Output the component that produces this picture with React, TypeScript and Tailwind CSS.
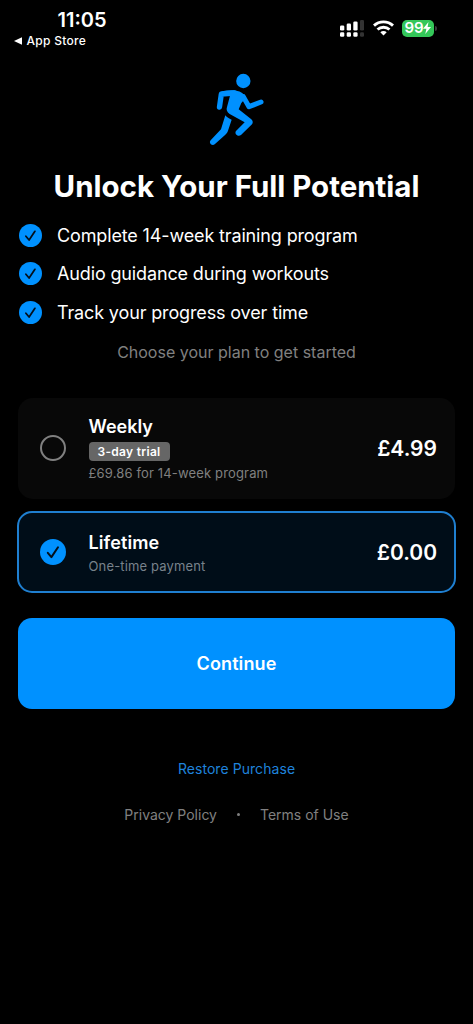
import { useState } from "react";

interface Plan {
  id: string;
  name: string;
  price: string;
  badge?: string;
  detail: string;
}

const features = [
  "Complete 14-week training program",
  "Audio guidance during workouts",
  "Track your progress over time",
];

const plans: Plan[] = [
  {
    id: "weekly",
    name: "Weekly",
    price: "£4.99",
    badge: "3-day trial",
    detail: "£69.86 for 14-week program",
  },
  {
    id: "lifetime",
    name: "Lifetime",
    price: "£0.00",
    detail: "One-time payment",
  },
];

function CheckCircle({ className }: { className: string }) {
  return (
    <svg viewBox="0 0 26 26" className={className}>
      <circle cx="13" cy="13" r="13" fill="#0091ff" />
      <path
        d="M7.800 13.800l3.600 4.300 6.600-9.800"
        fill="none"
        stroke="#04101c"
        strokeWidth="2"
        strokeLinecap="round"
        strokeLinejoin="round"
      />
    </svg>
  );
}

function Runner() {
  return (
    <svg
      viewBox="0 0 255 270"
      className="h-[90px] w-[85px]"
      fill="none"
      stroke="#0091ff"
      strokeLinecap="round"
      strokeLinejoin="round"
    >
      <circle cx="145" cy="48" r="21.500" fill="#0091ff" stroke="none" />
      <path d="M73.500 126L79 87L118 84" strokeWidth="16" />
      <path d="M145 95L162 125L198 111" strokeWidth="15" />
      <path
        d="M80 79C96 76 112 75 124 77C138 79 147 86 153 98L139 114L131 133L168 162C174 167 175 173 171 178L138 210C129 217 117 207 123 198L149 172L104 147C96 142 93 134 96 126L105 92Z"
        fill="#0091ff"
        stroke="none"
      />
      <path
        d="M91 151C96 157 102 161 110 164L99 197C97 202 95 205 91 209L60 237C51 245 40 234 47 226L78 193Z"
        fill="#0091ff"
        stroke="none"
      />
    </svg>
  );
}

function StatusBar() {
  return (
    <div className="flex h-[65px] items-start justify-between pr-[36px] pl-[14px]">
      <div>
        <div className="mt-[8px] ml-[43.500px] text-[20px] leading-[24px] font-semibold">
          11:05
        </div>
        <div className="mt-[1px] flex h-4 items-center gap-[4.500px] text-[12px] font-medium tracking-[0.3px]">
          <svg viewBox="0 0 8 8" className="h-2 w-2">
            <path d="M0 4L8 .3v7.400z" fill="white" />
          </svg>
          App Store
        </div>
      </div>
      <div className="mt-[18px] flex h-5 items-center">
        <svg viewBox="0 0 24 17" className="h-[17px] w-6" fill="white">
          <rect x="0" y="5.500" width="4.300" height="5" rx="1.300" />
          <rect x="6.700" y="3.500" width="4.300" height="7" rx="1.300" />
          <rect x="13.300" y="1.500" width="4.300" height="9" rx="1.300" />
          <rect x="20" y="0" width="4" height="10.500" rx="1.300" fill="#333" />
          <rect x="0" y="12.300" width="4.300" height="4.400" rx="1.300" />
          <rect x="6.700" y="12.300" width="4.300" height="4.400" rx="1.300" />
          <rect x="13.300" y="12.300" width="4.300" height="4.400" rx="1.300" />
          <rect x="20" y="12.300" width="4" height="4.400" rx="1.300" fill="#333" />
        </svg>
        <svg
          viewBox="0 0 21 16"
          className="ml-[9px] h-4 w-[21px]"
          fill="none"
          stroke="white"
          strokeWidth="2.900"
        >
          <path d="M1 5.600C6.300.6 14.700.6 20 5.600" />
          <path d="M4.500 9.500C8 6.400 13 6.400 16.500 9.500" />
          <path d="M7.300 12.300C9.200 10.700 11.800 10.700 13.700 12.300L10.500 15.600Z" fill="white" stroke="none" />
        </svg>
        <div className="ml-[8px] flex h-[17px] w-8 items-center justify-center rounded-[5px] bg-[#34c759] text-[15px] font-semibold tracking-[-0.2px]">
          99
          <svg viewBox="0 0 8 12" className="h-3 w-2">
            <path d="M5.500 0L0 6.800h3.400L2.300 12L8 5.100H4.600z" fill="white" />
          </svg>
        </div>
        <div className="ml-px h-[5px] w-[2px] rounded-r-full bg-[#3a3a3c]" />
      </div>
    </div>
  );
}

export default function App() {
  const [selected, setSelected] = useState("lifetime");

  return (
    <div className="h-[1024px] w-[473px] overflow-hidden bg-black font-['Inter',sans-serif] text-white">
      <StatusBar />

      <div className="pl-[195px]">
        <Runner />
      </div>

      <h1 className="mt-[11px] text-center text-[29.500px] leading-10 font-bold tracking-[-0.02px] whitespace-nowrap">
        Unlock Your Full Potential
      </h1>

      <ul className="mt-[10.500px] pl-[19px]">
        {features.map((feature) => (
          <li
            key={feature}
            className="flex h-[38.300px] items-center gap-[15px] text-[18px] tracking-[-0.14px]"
          >
            <CheckCircle className="h-[23px] w-[23px]" />
            <span>{feature}</span>
          </li>
        ))}
      </ul>

      <p className="mt-[8.500px] text-center text-[16px] leading-6 text-[#808080]">
        Choose your plan to get started
      </p>

      <div className="mt-[34px] flex flex-col gap-[12px] px-[17px]">
        {plans.map((plan) => {
          const active = plan.id === selected;
          return (
            <button
              key={plan.id}
              onClick={() => setSelected(plan.id)}
              className={`flex items-center rounded-[15px] text-left ${plan.badge ? "h-[101px]" : "h-[82px]"} ${active ? "border-2 border-[#1f7fd0] bg-[#000d18] pr-[17px] pl-[21px]" : "mx-px bg-[#080808] pr-[18px] pl-[22px]"}`}
            >
              {active ? (
                <CheckCircle className="h-[26px] w-[26px]" />
              ) : (
                <span className="h-[26px] w-[26px] rounded-full border-2 border-[#808080]" />
              )}
              <span className="ml-[22.500px] flex flex-1 flex-col items-start">
                <span
                  className={`text-[18px] leading-6 font-semibold ${plan.badge ? "pt-[1px]" : "pt-[2px] tracking-[0.1px]"}`}
                >
                  {plan.name}
                </span>
                {plan.badge && (
                  <span className="mt-[3px] mb-[3px] flex h-[19px] w-[81px] items-center justify-center rounded-[4px] bg-[#666] text-[12px] font-semibold tracking-[0.3px]">
                    {plan.badge}
                  </span>
                )}
                <span
                  className={`text-[13px] leading-[18px] tracking-[0.15px] ${active ? "mt-[1.500px] text-[#78828b]" : "text-[#808080]"}`}
                >
                  {plan.detail}
                </span>
              </span>
              <span className={`text-[21px] font-semibold ${plan.badge ? "" : "pt-[1px]"}`}>
                {plan.price}
              </span>
            </button>
          );
        })}
      </div>

      <div className="mt-[25px] px-[18px]">
        <button className="h-[91px] w-full rounded-[14px] bg-[#0091ff] pt-[1px] text-[18px] font-semibold tracking-[0.1px]">
          Continue
        </button>
      </div>

      <div className="mt-[50px] text-center text-[14px] leading-5 text-[#1f83dc]">
        <button className="tracking-[0.06px]">Restore Purchase</button>
      </div>

      <div className="mt-[26px] flex items-center justify-center gap-5 text-[14px] leading-5 text-[#808080]">
        <span>Privacy Policy</span>
        <span className="h-[3px] w-[3px] rounded-full bg-[#808080]" />
        <span>Terms of Use</span>
      </div>
    </div>
  );
}
